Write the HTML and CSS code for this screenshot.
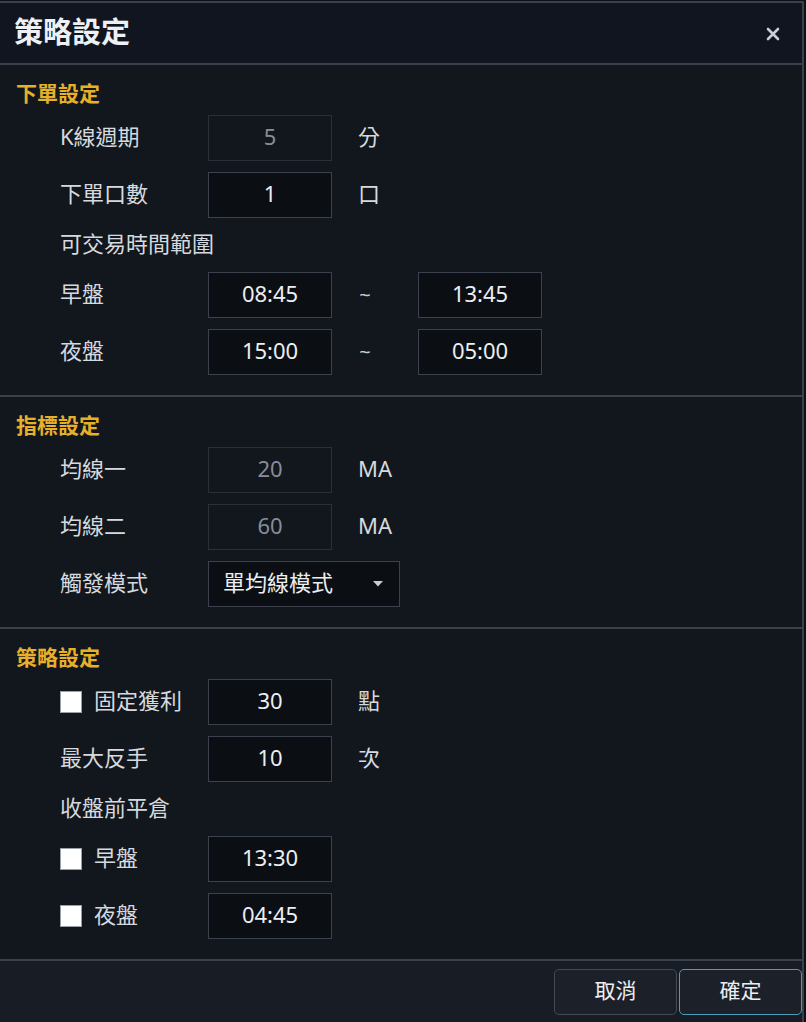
FILE: index.html
```html
<!DOCTYPE html>
<html lang="zh-Hant">
<head>
<meta charset="utf-8">
<title>策略設定</title>
<link rel="stylesheet" href="styles.css">
</head>
<body>
<div class="dialog">
  <header class="head">
    <h1 class="title">策略設定</h1>
    <span class="close" aria-label="close">
      <svg width="14" height="14" viewBox="0 0 14 14"><path d="M2 2 L12 12 M12 2 L2 12" stroke="#c9cdd4" stroke-width="2.6" stroke-linecap="round"/></svg>
    </span>
  </header>

  <section class="sec">
    <h2 class="sec-title">下單設定</h2>
    <div class="rows">
      <div class="row"><span class="lbl">K線週期</span><span class="inp dis">5</span><span class="unit">分</span></div>
      <div class="row"><span class="lbl">下單口數</span><span class="inp">1</span><span class="unit">口</span></div>
      <div class="row text-row"><span class="lbl wide">可交易時間範圍</span></div>
      <div class="row"><span class="lbl">早盤</span><span class="inp">08:45</span><span class="tilde">~</span><span class="inp">13:45</span></div>
      <div class="row"><span class="lbl">夜盤</span><span class="inp">15:00</span><span class="tilde">~</span><span class="inp">05:00</span></div>
    </div>
  </section>

  <section class="sec">
    <h2 class="sec-title">指標設定</h2>
    <div class="rows">
      <div class="row"><span class="lbl">均線一</span><span class="inp dis">20</span><span class="unit">MA</span></div>
      <div class="row"><span class="lbl">均線二</span><span class="inp dis">60</span><span class="unit">MA</span></div>
      <div class="row"><span class="lbl">觸發模式</span>
        <span class="select"><span class="sel-text">單均線模式</span>
          <svg class="caret" width="10" height="6" viewBox="0 0 10 6"><path d="M0 0 H10 L5 5.5 Z" fill="#c9cdd4"/></svg>
        </span>
      </div>
    </div>
  </section>

  <section class="sec">
    <h2 class="sec-title">策略設定</h2>
    <div class="rows">
      <div class="row"><span class="lbl"><span class="chk"></span>固定獲利</span><span class="inp">30</span><span class="unit">點</span></div>
      <div class="row"><span class="lbl">最大反手</span><span class="inp">10</span><span class="unit">次</span></div>
      <div class="row text-row"><span class="lbl wide">收盤前平倉</span></div>
      <div class="row"><span class="lbl"><span class="chk"></span>早盤</span><span class="inp">13:30</span></div>
      <div class="row"><span class="lbl"><span class="chk"></span>夜盤</span><span class="inp">04:45</span></div>
    </div>
  </section>

  <footer class="foot">
    <span class="btn">取消</span>
    <span class="btn primary">確定</span>
  </footer>
</div>
</body>
</html>
```
FILE: styles.css
```css
html, body {
  margin: 0;
  padding: 0;
  background: #0d1117;
}
body {
  font-family: "Noto Sans", "Noto Sans CJK TC", sans-serif;
  color: #d6dadf;
  width: 806px;
  height: 1022px;
  overflow: hidden;
  padding-top: 1px;
  box-sizing: border-box;
}
.dialog {
  width: 804px;
  height: 1021px;
  box-sizing: border-box;
  border-top: 2px solid #39414d;
  border-right: 2px solid #39414d;
  background: #12171e;
  display: flex;
  flex-direction: column;
}
.head {
  height: 60px;
  flex: none;
  display: flex;
  align-items: center;
  justify-content: space-between;
  padding: 0 22px 0 14px;
  background: #10151f;
  border-bottom: 2px solid #39414d;
}
.title {
  margin: 0;
  font-size: 29px;
  font-weight: 700;
  color: #eef0f3;
  line-height: 1;
  padding-bottom: 3px;
}
.close {
  display: flex;
  width: 14px;
  height: 14px;
  margin-top: 1px;
}
.sec {
  padding: 16px 0 20px 0;
  border-bottom: 2px solid #39414d;
  flex: none;
}
.sec-title {
  margin: 0;
  height: 30px;
  box-sizing: border-box;
  display: flex;
  align-items: center;
  padding: 0 0 5px 16px;
  font-size: 21px;
  font-weight: 700;
  line-height: 1;
  color: #e6b02a;
}
.rows {
  margin-top: 4px;
  padding-left: 60px;
  display: flex;
  flex-direction: column;
  gap: 11px;
}
.row {
  height: 46px;
  display: flex;
  align-items: center;
  font-size: 22px;
  line-height: 1;
}
.row.text-row {
  height: 32px;
}
.lbl {
  width: 148px;
  flex: none;
  display: flex;
  align-items: center;
  white-space: nowrap;
  color: #d6dadf;
  padding-bottom: 5px;
}
.lbl.wide {
  width: auto;
}
.inp {
  width: 124px;
  height: 46px;
  box-sizing: border-box;
  border: 1px solid #3b424d;
  background: #0b0e13;
  color: #eceef1;
  display: flex;
  align-items: center;
  justify-content: center;
  font-size: 22px;
  padding-bottom: 5px;
  flex: none;
}
.inp.dis {
  background: #12171e;
  border-color: #2a3039;
  color: #878e97;
}
.unit {
  margin-left: 26px;
  color: #d6dadf;
  padding-bottom: 5px;
}
.tilde {
  width: 86px;
  box-sizing: border-box;
  padding: 0 20px 0 0;
  text-align: center;
  font-size: 20px;
  color: #c8ccd2;
}
.select {
  width: 192px;
  height: 46px;
  box-sizing: border-box;
  border: 1px solid #3b424d;
  background: #0b0e13;
  display: flex;
  align-items: center;
  justify-content: space-between;
  padding: 0 16px 0 14px;
  color: #eceef1;
  font-size: 22px;
}
.sel-text {
  padding-bottom: 5px;
}
.caret {
  display: block;
}
.chk {
  width: 22px;
  height: 22px;
  box-sizing: border-box;
  background: #ffffff;
  border: 1px solid #9aa0a8;
  margin-right: 12px;
  margin-bottom: -5px;
  flex: none;
}
.foot {
  flex: 1;
  background: #181c24;
  display: flex;
  justify-content: flex-end;
  align-items: flex-start;
  padding-top: 8px;
  gap: 2px;
}
.btn {
  width: 123px;
  height: 46px;
  box-sizing: border-box;
  border: 1px solid #434a55;
  border-radius: 5px;
  background: #1c2029;
  color: #eceef1;
  font-size: 21px;
  line-height: 1;
  padding-bottom: 4px;
  display: flex;
  align-items: center;
  justify-content: center;
}
.btn.primary {
  border-color: #4d9db8;
}
```
